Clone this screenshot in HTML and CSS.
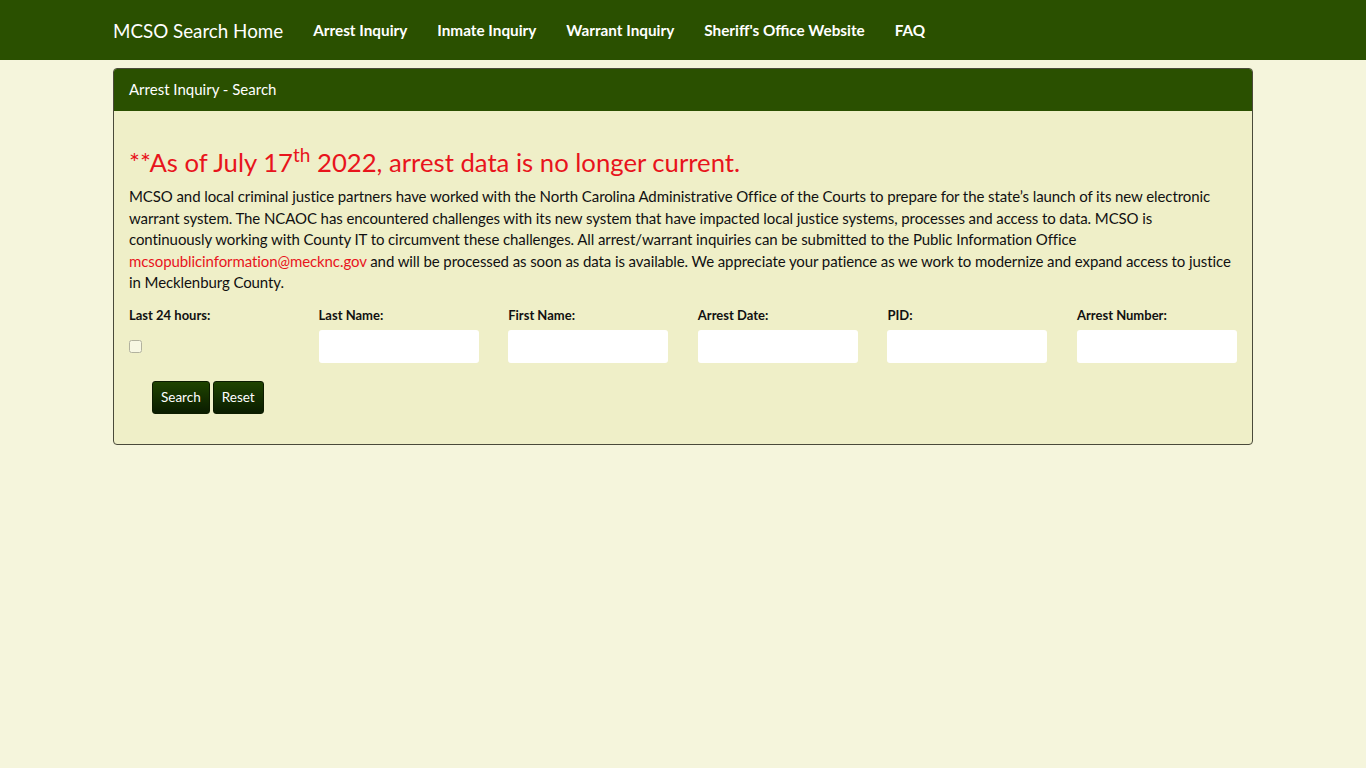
FILE: index.html
```html
<!DOCTYPE html>
<html lang="en">
  <head>
    <meta charset="UTF-8" />
    <meta name="viewport" content="width=device-width, initial-scale=1.0" />
    <title>Arrest Inquiry - Search</title>
    <link rel="stylesheet" href="styles.css">
  </head>
  <body>
    <nav class="navbar">
      <div class="container nav-inner">
        <a href="#" class="brand">MCSO Search Home</a>
        <ul class="nav-links">
          <li><a href="#">Arrest Inquiry</a></li>
          <li><a href="#">Inmate Inquiry</a></li>
          <li><a href="#">Warrant Inquiry</a></li>
          <li><a href="#">Sheriff's Office Website</a></li>
          <li><a href="#">FAQ</a></li>
        </ul>
      </div>
    </nav>

    <div class="container">
      <div class="panel">
        <div class="panel-heading">Arrest Inquiry - Search</div>
        <div class="panel-body">
          <h3 class="notice">**As of July 17<sup>th</sup> 2022, arrest data is no longer current.</h3>
          <p class="notice-text">
            MCSO and local criminal justice partners have worked with the North Carolina Administrative Office of the Courts to prepare for the state’s launch of its new electronic warrant system. The NCAOC has encountered challenges with its new system that have impacted local justice systems, processes and access to data. MCSO is continuously working with County IT to circumvent these challenges. All arrest/warrant inquiries can be submitted to the Public Information Office
            <a href="#">mcsopublicinformation@mecknc.gov</a> and will be processed as soon as data is available. We appreciate your patience as we work to modernize and expand access to justice in Mecklenburg County.
          </p>

          <form class="search-form">
            <div class="field-row">
              <div class="field">
                <label for="last24">Last 24 hours:</label>
                <input type="checkbox" id="last24" class="check" />
              </div>
              <div class="field">
                <label for="lastName">Last Name:</label>
                <input type="text" id="lastName" class="form-control" />
              </div>
              <div class="field">
                <label for="firstName">First Name:</label>
                <input type="text" id="firstName" class="form-control" />
              </div>
              <div class="field">
                <label for="arrestDate">Arrest Date:</label>
                <input type="text" id="arrestDate" class="form-control" />
              </div>
              <div class="field">
                <label for="pid">PID:</label>
                <input type="text" id="pid" class="form-control" />
              </div>
              <div class="field">
                <label for="arrestNumber">Arrest Number:</label>
                <input type="text" id="arrestNumber" class="form-control" />
              </div>
            </div>
            <div class="actions">
              <button type="submit" class="btn">Search</button>
              <button type="reset" class="btn">Reset</button>
            </div>
          </form>
        </div>
      </div>
    </div>
  </body>
</html>
```

FILE: styles.css
```css
:root {
  --green: #2a5000;
  --page: #f5f5dc;
  --panel: #efefc8;
  --red: #e8141c;
  --text: #111;
}

* {
  box-sizing: border-box;
  margin: 0;
  padding: 0;
}

body {
  background: var(--page);
  font-family: Lato, "Open Sans", sans-serif;
  color: var(--text);
  font-size: 15px;
}

.container {
  width: 1140px;
  margin: 0 auto;
}

/* Top navigation */
.navbar {
  background: var(--green);
  height: 60px;
}

.nav-inner {
  display: flex;
  align-items: center;
  height: 60px;
}

.brand {
  color: #fff;
  text-decoration: none;
  font-size: 18.8px;
  margin-right: 15px;
}

.nav-links {
  display: flex;
  list-style: none;
}

.nav-links a {
  display: block;
  padding: 0 15px;
  color: #fff;
  font-weight: 700;
  font-size: 15.3px;
  text-decoration: none;
}

/* Search panel */
.panel {
  margin-top: 8px;
  background: var(--panel);
  border: 1px solid #4a4a3a;
  border-radius: 4px;
  overflow: hidden;
}

.panel-heading {
  background: var(--green);
  color: #fff;
  font-size: 15px;
  height: 42px;
  line-height: 41px;
  padding: 0 15px;
}

.panel-body {
  padding: 36px 15px 30px;
}

.notice {
  color: var(--red);
  font-weight: 400;
  font-size: 25.7px;
  line-height: 30px;
  margin-bottom: 9px;
}

.notice sup {
  font-size: 19px;
  line-height: 0;
  vertical-align: 10px;
}

.notice-text {
  line-height: 21.5px;
  letter-spacing: -0.09px;
  margin-bottom: 13px;
}

.notice-text a {
  color: var(--red);
  text-decoration: none;
}

.field-row {
  display: grid;
  grid-template-columns: repeat(6, 160px);
  column-gap: 29.6px;
}

.field label {
  display: block;
  font-size: 13px;
  font-weight: 700;
  margin-bottom: 7px;
}

.form-control {
  width: 100%;
  height: 33px;
  border: none;
  border-radius: 3px;
  background: #fff;
  padding: 0 8px;
  font-size: 14px;
}

.check {
  width: 13px;
  height: 13px;
  margin-top: 10px;
  opacity: 0.5;
}

.actions {
  display: flex;
  gap: 3px;
  margin: 18px 0 0 23px;
}

.btn {
  height: 33px;
  padding: 0 8px;
  border: 1px solid #0c1c00;
  border-radius: 3px;
  background: linear-gradient(#1f4400, #0a1c00);
  color: #fff;
  font-family: Lato, sans-serif;
  font-size: 13.5px;
  cursor: pointer;
}
```
